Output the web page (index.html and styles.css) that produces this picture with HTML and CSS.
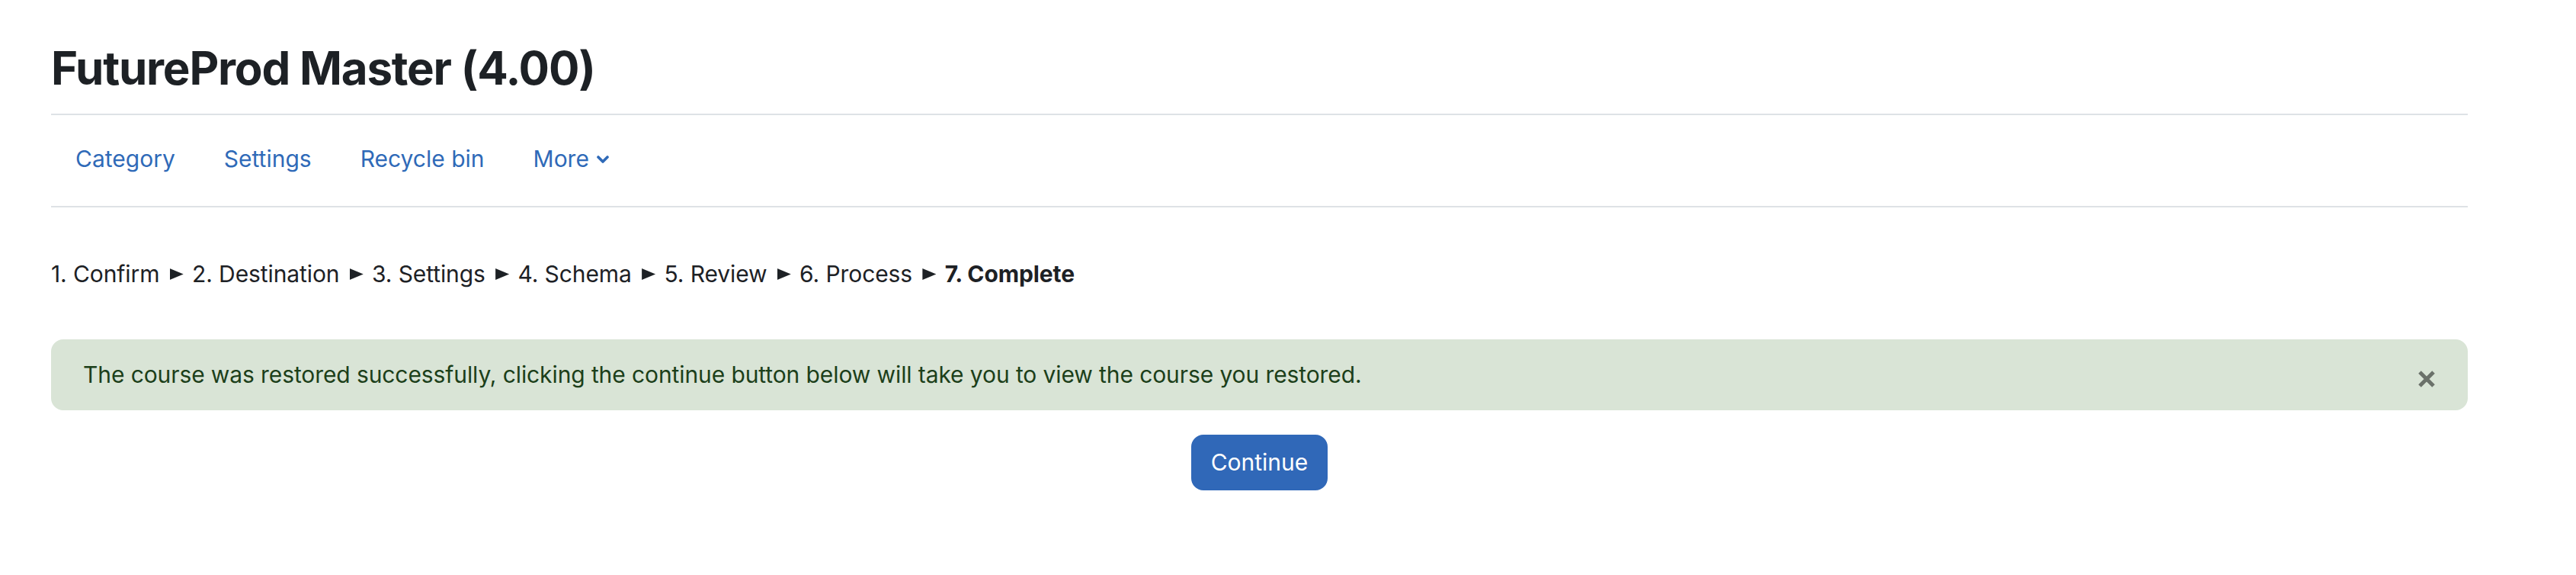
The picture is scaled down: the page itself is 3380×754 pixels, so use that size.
FILE: index.html
```html
<!DOCTYPE html>
<html lang="en">
<head>
<meta charset="utf-8">
<title>FutureProd Master (4.00)</title>
<link rel="stylesheet" href="styles.css">
</head>
<body>
<div class="page">
  <header class="page-header">
    <h1 class="page-title">FutureProd Master (4.00)</h1>
  </header>
  <nav class="secondary-nav">
    <a class="nav-link" href="#">Category</a>
    <a class="nav-link" href="#">Settings</a>
    <a class="nav-link" href="#">Recycle bin</a>
    <a class="nav-link more" href="#">More
      <svg class="chevron" width="16" height="11" viewBox="0 0 16 11"><path d="M2 2 L8 8 L14 2" fill="none" stroke="currentColor" stroke-width="3.6" stroke-linecap="round" stroke-linejoin="round"/></svg>
    </a>
  </nav>
  <div class="steps">1. Confirm <span class="arrow" aria-label="►"></span> 2. Destination <span class="arrow" aria-label="►"></span> 3. Settings <span class="arrow" aria-label="►"></span> 4. Schema <span class="arrow" aria-label="►"></span> 5. Review <span class="arrow" aria-label="►"></span> 6. Process <span class="arrow" aria-label="►"></span> <strong>7. Complete</strong></div>
  <div class="alert">
    <span class="alert-text">The course was restored successfully, clicking the continue button below will take you to view the course you restored.</span>
    <button class="close" type="button" aria-label="Close">
      <svg width="24" height="24" viewBox="0 0 24 24"><path d="M3 3 L21 21 M21 3 L3 21" stroke="currentColor" stroke-width="5" stroke-linecap="butt"/></svg>
    </button>
  </div>
  <div class="actions">
    <button class="btn-primary" type="button">Continue</button>
  </div>
</div>
</body>
</html>
```

FILE: styles.css
```css
html, body {
  margin: 0;
  padding: 0;
  background: #ffffff;
}
body {
  font-family: Inter, "Liberation Sans", sans-serif;
  color: #1d2125;
}
.page {
  width: 3171px;
  margin-left: 67px;
}
.page-header {
  padding: 53px 0 24px;
  border-bottom: 2px solid #dee2e6;
}
.page-title {
  margin: 0;
  font-size: 60px;
  line-height: 72px;
  font-weight: 700;
  letter-spacing: -1.2px;
  color: #1d2125;
}
.secondary-nav {
  display: flex;
  padding: 35px 0 39px;
  border-bottom: 2px solid #dee2e6;
}
.nav-link {
  font-size: 30px;
  line-height: 45px;
  color: #2f6ab8;
  text-decoration: none;
  padding: 0 32px;
  display: flex;
  align-items: center;
}
.chevron {
  margin-left: 10px;
  margin-top: 2px;
}
.steps {
  padding-top: 65px;
  font-size: 30px;
  line-height: 45px;
  letter-spacing: -0.1px;
  color: #1d2125;
}
.steps strong {
  font-weight: 700;
}
.arrow {
  display: inline-block;
  width: 18px;
  height: 15px;
  margin: 0 3px 0 5px;
  vertical-align: 3px;
  background: #1d2125;
  clip-path: polygon(0 0, 100% 50%, 0 100%);
}
.alert {
  margin-top: 63px;
  display: flex;
  align-items: center;
  justify-content: space-between;
  padding: 22px 40px;
  border: 2px solid #d9e4d6;
  background: #d9e4d6;
  border-radius: 16px;
  color: #1c3f1a;
  font-size: 30px;
  line-height: 45px;
  letter-spacing: -0.1px;
}
.close {
  background: none;
  border: 0;
  padding: 0;
  margin: 10px 0 0;
  color: #6b716a;
  display: flex;
  width: 24px;
  height: 24px;
}
.actions {
  display: flex;
  justify-content: center;
  margin-top: 32px;
}
.btn-primary {
  font-family: Inter, "Liberation Sans", sans-serif;
  font-size: 30px;
  line-height: 45px;
  padding: 12px 24px;
  border: 2px solid #3068b8;
  background: #3068b8;
  color: #ffffff;
  border-radius: 16px;
}
```
